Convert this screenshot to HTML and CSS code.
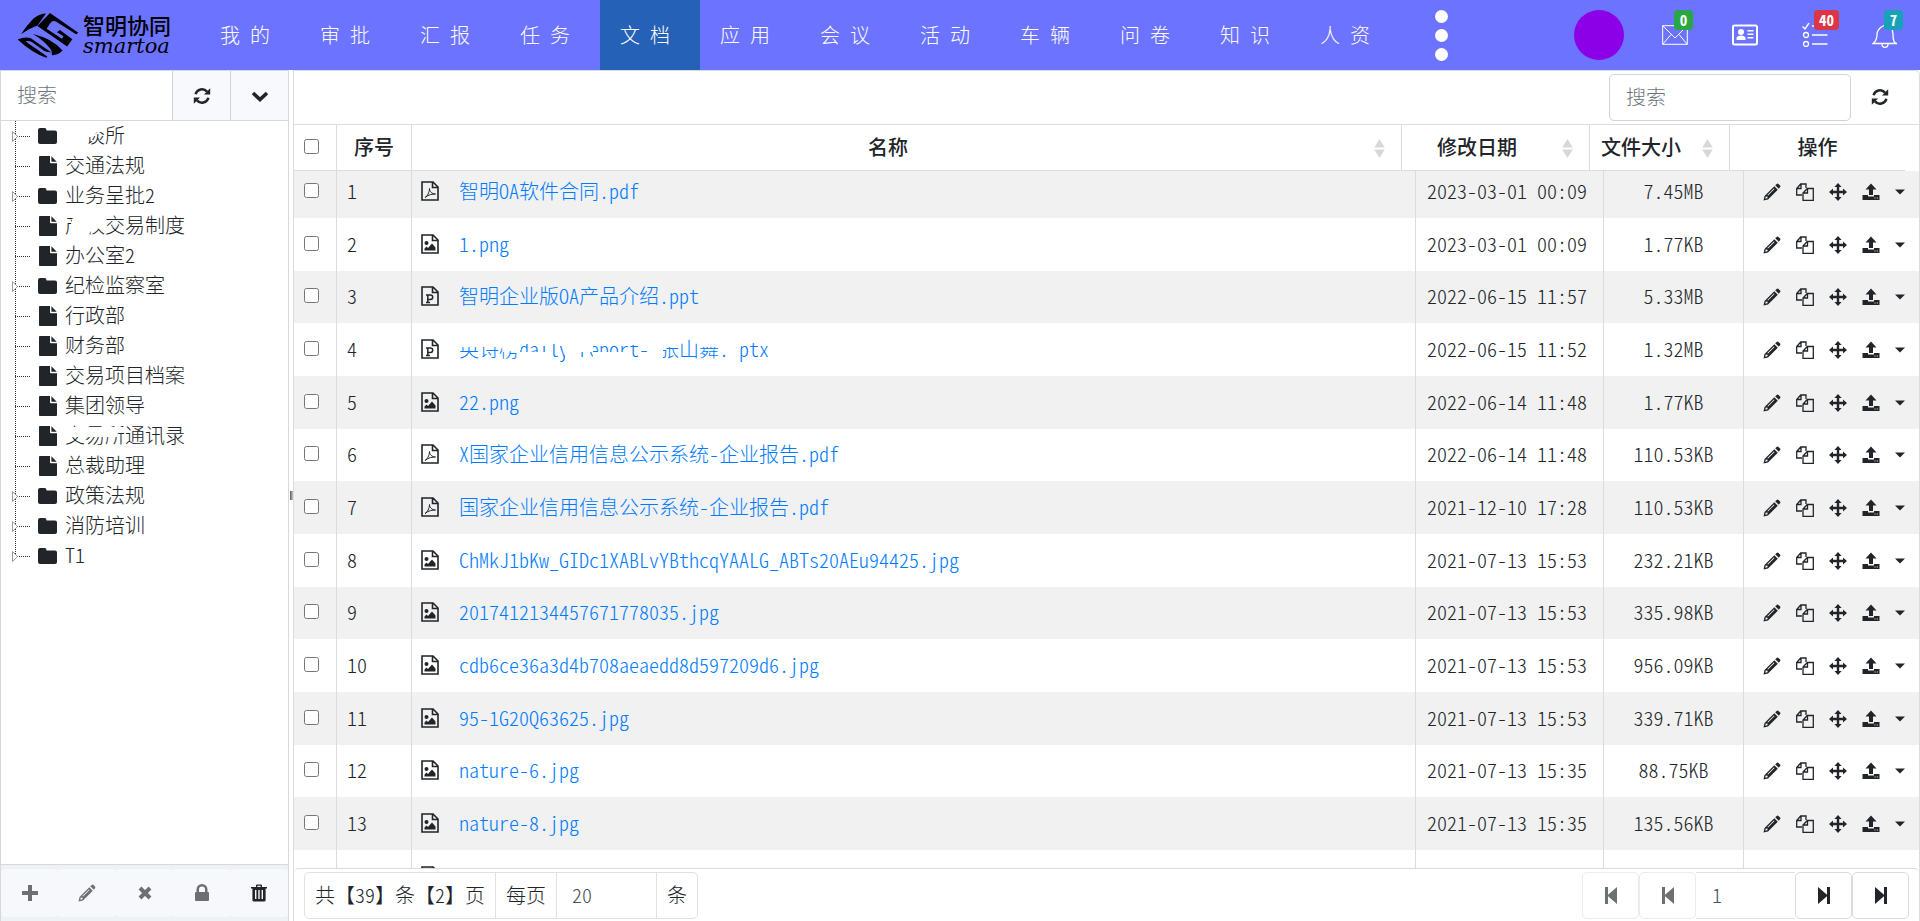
FILE: index.html
```html
<!DOCTYPE html>
<html lang="zh-CN">
<head>
<meta charset="utf-8">
<title>智明协同 - 文档</title>
<link rel="stylesheet" href="styles.css">
</head>
<body>
<svg class="sprite" aria-hidden="true">
  <symbol id="i-refresh" viewBox="0 0 18 18"><path d="M2.6 7.2A6.6 6.6 0 0 1 14 4.6M15.4 10.8A6.6 6.6 0 0 1 4 13.4" fill="none" stroke="currentColor" stroke-width="2.5"/><path d="M17.2 1.2v6.2H11zM.8 16.8v-6.2H7z"/></symbol>
  <symbol id="i-down" viewBox="0 0 18 18"><path d="M2 6l7 6.6L16 6" fill="none" stroke="currentColor" stroke-width="3.6"/></symbol>
  <symbol id="i-folder" viewBox="0 0 19 16"><path d="M2 0h4.5a2 2 0 0 1 2 2v.6H17a2 2 0 0 1 2 2V14a2 2 0 0 1-2 2H2a2 2 0 0 1-2-2V2a2 2 0 0 1 2-2z"/></symbol>
  <symbol id="i-file" viewBox="0 0 18 20"><path d="M1 0h10v6.2a1 1 0 0 0 1 1h6V19a1 1 0 0 1-1 1H1a1 1 0 0 1-1-1V1a1 1 0 0 1 1-1zM12.4.3l5.3 5.5h-5.3z"/></symbol>
  <symbol id="i-plus" viewBox="0 0 18 18"><path d="M7 1h4v6h6v4h-6v6H7v-6H1V7h6z"/></symbol>
  <symbol id="i-pencil" viewBox="0 0 18 18"><path d="M12.2 2.2 14 .8q.8-.5 1.5.2l1.600 1.600q.6.8 0 1.500L15.800 5.800zM11.300 3.200l3.500 3.500L5 16.600l-4.500 1 1-4.500zM2.700 13.600l-.4 2.100 2.100-.5.300-1.500zM10.900 5.400l-6.500 6.500.6.500 6.500-6.500z" fill-rule="evenodd"/></symbol>
  <symbol id="i-times" viewBox="0 0 18 18"><path d="M4 4l10 10M14 4L4 14" fill="none" stroke="currentColor" stroke-width="4"/></symbol>
  <symbol id="i-lock" viewBox="0 0 18 18"><path d="M3.500 8V5.500a5.500 5.500 0 0 1 11 0V8h.5q1 0 1 1v7q0 1-1 1H3q-1 0-1-1V9q0-1 1-1zM6 8h6V5.500a3 3 0 0 0-6 0z" fill-rule="evenodd"/></symbol>
  <symbol id="i-trash" viewBox="0 0 18 18"><path d="M6 3V1.500Q6 .5 7 .5h4q1 0 1 1V3h5v1.600h-1.400V16q0 1.500-1.500 1.500H3.900Q2.400 17.500 2.400 16V4.600H1V3zm1.400 0h3.200V1.800H7.400zM5 6v9h1.400V6zm3.300 0v9h1.400V6zm3.300 0v9H13V6z" fill-rule="evenodd"/></symbol>
  <symbol id="i-pdf" viewBox="0 0 18 20"><path d="M1 1h11l5 5v13H1zM11.500 1v5.500H17" fill="none" stroke="currentColor" stroke-width="1.600"/><path d="M4 16.500c2-1 4.500-5 4.500-9 0 3 2.500 5.500 6 5.500-3 0-7 .5-10.500 3.500z" fill="none" stroke="currentColor"/></symbol>
  <symbol id="i-image" viewBox="0 0 18 20"><path d="M1 1h11l5 5v13H1zM11.500 1v5.500H17" fill="none" stroke="currentColor" stroke-width="1.600"/><circle cx="5.500" cy="9" r="2"/><path d="M3.500 16.500v-2l2-2 1.500 1.500 4-4.500 3.500 4v3z"/></symbol>
  <symbol id="i-ppt" viewBox="0 0 18 20"><path d="M1 1h11l5 5v13H1zM11.500 1v5.500H17" fill="none" stroke="currentColor" stroke-width="1.600"/><path d="M5 9h5M6.800 9v7.500M5 16.400h4M7 9h2.500a2.200 2.200 0 0 1 0 4.400H7" fill="none" stroke="currentColor" stroke-width="1.500"/></symbol>
  <symbol id="i-copy" viewBox="0 0 18 18"><path d="M6 12H.7V5.500l4-4.500H10v4M.7 5.500H5V1M7 17.300V10l4.300-4.500h6v11.800zM7 10h4.500V5.500" fill="none" stroke="currentColor" stroke-width="1.300"/></symbol>
  <symbol id="i-move" viewBox="0 0 18 18"><path d="M9 0l3.600 4H10.200V7.800H14V5.400L18 9l-4 3.600v-2.400h-3.800V14h2.400L9 18l-3.600-4h2.400v-3.800H4v2.400L0 9l4-3.600v2.400h3.800V4H5.400z"/></symbol>
  <symbol id="i-upload" viewBox="0 0 18 18"><path d="M9 .5l5.500 6H11V12H7V6.500H3.500zM.5 12H6v1.500h6V12h5.500v5H.5zM12.500 14.500v1h1v-1zm2.300 0v1h1v-1z" fill-rule="evenodd"/></symbol>
  <symbol id="i-caret" viewBox="0 0 10 6"><path d="M0 .5h10l-5 5z"/></symbol>
  <symbol id="i-sort" viewBox="0 0 10 18"><path d="M5 0l5 8H0zM0 10h10l-5 8z"/></symbol>
  <symbol id="i-prev" viewBox="0 0 12 17"><path d="M0 0h3v7.700L12 0v17L3 9.300V17H0z"/></symbol>
  <symbol id="i-next" viewBox="0 0 12 17"><path d="M12 0H9v7.700L0 0v17l9-7.700V17h3z"/></symbol>
</svg>

<header class="topbar">
  <a class="brand" href="#">
    <svg class="brand-mark" viewBox="50 36 188 138"><path d="M62 103Q80 75 100 55 120 40 138 40L112 76Q85 85 62 103zM150 38l86 60-7 5-61-39q-10-4-18 6l-10 16 46 30 5-7-20-12 9-7 38 28-16 22-90-62zM52 119q22-10 40-4l44 30q10 7 18 12-12 2-22-4L96 127q-12-6-20-2l66 45-4 4Q96 160 52 119zM98 102q60 14 90 50-14 15-33 14 4-12-8-24-18-22-49-40z"/></svg>
    <span class="brand-text"><b>智明协同</b><i>smartoa</i></span>
  </a>
  <nav class="menu">
    <a href="#">我 的</a><a href="#">审 批</a><a href="#">汇 报</a><a href="#">任 务</a><a href="#" class="active">文 档</a><a href="#">应 用</a><a href="#">会 议</a><a href="#">活 动</a><a href="#">车 辆</a><a href="#">问 卷</a><a href="#">知 识</a><a href="#">人 资</a>
  </nav>
  <button class="more" aria-label="更多"><span></span><span></span><span></span></button>
  <div class="tools">
    <button class="avatar" aria-label="用户"></button>
    <button class="tool" aria-label="邮件"><svg width="26" height="20" viewBox="0 0 26 20"><path d="M.7.700h24.600v18.600H.7zM.7.700 13 13 25.300.7M.7 19.300l8.300-9.800M25.300 19.300 17 9.500" fill="none" stroke="#fff"/></svg><span class="badge green">0</span></button>
    <button class="tool" aria-label="通讯录"><svg width="26" height="22" viewBox="0 0 26 22"><rect x="1" y="1.500" width="24" height="19" rx="1.500" fill="none" stroke="#fff" stroke-width="2"/><circle cx="9" cy="8" r="3" fill="#fff"/><path d="M4.500 16v-2.500q1-2 4.500-2t4.500 2V16zM15.500 6h6v1.600h-6zm0 3.500h6v1.600h-6zm0 3.500h6v1.600h-6z" fill="#fff"/></svg></button>
    <button class="tool" aria-label="待办"><svg width="26" height="24" viewBox="0 0 26 24"><path d="M.5 3.500l2.500 2.500L7 0M10 3h15.500M10 12h15.500M10 21h15.500" fill="none" stroke="#fff" stroke-width="1.400"/><circle cx="4" cy="12" r="2.500" fill="none" stroke="#fff" stroke-width="1.300"/><circle cx="4" cy="21" r="2.500" fill="none" stroke="#fff" stroke-width="1.300"/></svg><span class="badge red">40</span></button>
    <button class="tool" aria-label="通知"><svg width="26" height="26" viewBox="0 0 26 26"><path d="M1 21.500q4-3 4-9T13 3q8 .5 8 9.500t4 9zM10 22q0 3.300 3 3.300t3-3.300" fill="none" stroke="#fff" stroke-width="1.300"/></svg><span class="badge teal">7</span></button>
  </div>
</header>

<div class="layout">
  <aside class="side">
    <div class="side-search">
      <input type="text" placeholder="搜索" aria-label="搜索目录">
      <button aria-label="刷新"><svg class="ic"><use href="#i-refresh"/></svg></button>
      <button aria-label="展开"><svg class="ic"><use href="#i-down"/></svg></button>
    </div>
    <ul class="tree" id="tree"></ul>
    <div class="side-tools">
      <button disabled aria-label="新增"><svg class="ic"><use href="#i-plus"/></svg></button>
      <button disabled aria-label="编辑"><svg class="ic"><use href="#i-pencil"/></svg></button>
      <button disabled aria-label="取消"><svg class="ic"><use href="#i-times"/></svg></button>
      <button disabled aria-label="权限"><svg class="ic"><use href="#i-lock"/></svg></button>
      <button aria-label="删除"><svg class="ic"><use href="#i-trash"/></svg></button>
    </div>
  </aside>
  <div class="splitter"><span></span></div>
  <main class="main">
    <div class="toolbar">
      <input type="text" placeholder="搜索" aria-label="搜索文档">
      <button aria-label="刷新列表"><svg class="ic"><use href="#i-refresh"/></svg></button>
    </div>
    <div class="head-wrap">
      <table class="grid head">
        <colgroup><col class="c-check"><col class="c-no"><col><col class="c-date"><col class="c-size"><col class="c-ops"></colgroup>
        <thead><tr>
          <th><input type="checkbox" aria-label="全选"></th><th>序号</th>
          <th class="sortable">名称<svg><use href="#i-sort"/></svg></th>
          <th class="sortable">修改日期<svg><use href="#i-sort"/></svg></th>
          <th class="sortable">文件大小<svg><use href="#i-sort"/></svg></th>
          <th>操作</th>
        </tr></thead>
      </table>
    </div>
    <div class="body-wrap">
      <table class="grid body">
        <colgroup><col class="c-check"><col class="c-no"><col><col class="c-date"><col class="c-size"><col class="c-ops"></colgroup>
        <tbody id="rows"></tbody>
      </table>
    </div>
    <footer class="pager">
      <div class="group">
        <span>共【39】条【2】页</span><label for="size">每页</label><input id="size" type="text" value="20"><span>条</span>
      </div>
      <div class="pages">
        <button disabled aria-label="首页"><svg><use href="#i-prev"/></svg></button>
        <button disabled aria-label="上一页"><svg><use href="#i-prev"/></svg></button>
        <input type="text" value="1" aria-label="页码">
        <button aria-label="下一页"><svg><use href="#i-next"/></svg></button>
        <button aria-label="末页"><svg><use href="#i-next"/></svg></button>
      </div>
    </footer>
  </main>
</div>
<script src="app.js"></script>
</body>
</html>
```
FILE: styles.css
```css
* { box-sizing: border-box; }
html, body { height: 100%; }
body {
  margin: 0;
  display: flex;
  flex-direction: column;
  overflow: hidden;
  background: #fff;
  color: #212529;
  font-family: "Noto Sans CJK SC", sans-serif;
  font-size: 20px;
  font-weight: 300;
  line-height: 30px;
  font-feature-settings: "hwid" 1;
}
button, input { font: inherit; font-feature-settings: inherit; color: inherit; }
button { border: 0; padding: 0; background: none; display: flex; align-items: center; justify-content: center; }
input[type="text"] { border: 0; outline: 0; min-width: 0; background: #fff; color: #495057; }
input::placeholder { color: #6c757d; opacity: 1; }
input[type="checkbox"] { width: 15px; height: 15px; margin: 0; vertical-align: middle; }
a { text-decoration: none; color: #007bff; }
svg { fill: currentColor; display: block; flex: none; }
.sprite { display: none; }
.ic { width: 18px; height: 18px; }

.topbar { display: flex; align-items: center; height: 70px; flex: none; background: #6c73ff; color: #fff; }
.brand { width: 200px; display: flex; align-items: center; gap: 4px; padding-left: 17px; color: #000; }
.brand-mark { width: 62px; height: 46px; }
.brand-text { display: flex; flex-direction: column; }
.brand-text b { font-size: 22px; font-weight: 500; line-height: 22px; }
.brand-text i { font: italic 21px/22px "DejaVu Serif", serif; font-feature-settings: normal; }
.menu { display: flex; align-self: stretch; }
.menu a { width: 100px; display: flex; align-items: center; justify-content: center; padding-right: 10px; color: #fff; }
.menu a.active { background: #2661b8; }
.more { width: 82px; flex-direction: column; gap: 6px; }
.more span { width: 13px; height: 13px; border-radius: 50%; background: #fff; }
.tools { display: flex; align-items: center; margin-left: auto; }
.avatar { width: 50px; height: 50px; border-radius: 50%; background: #8b00e6; margin-right: 16px; }
.tool { width: 70px; height: 70px; position: relative; }
.badge { position: absolute; top: 10px; left: 34px; padding: 0 5px; border-radius: 4px; font-size: 15px; font-weight: 700; line-height: 20px; color: #fff; min-width: 19px; }
.green { background: #28a745; }
.red { background: #dc3545; }
.teal { background: #17a2b8; }

.layout { flex: 1; display: flex; min-height: 0; }
.side { width: 289px; flex: none; display: flex; flex-direction: column; border: 1px solid #d6d8db; border-bottom: 0; }
.side-search { display: flex; height: 50px; border-bottom: 1px solid #d6d8db; }
.side-search input { flex: 1; padding: 0 16px 2px; }
.side-search button { width: 58px; background: #f8f9fc; border-left: 1px solid #ced4da; }
.tree { flex: 1; list-style: none; margin: 0; padding: 0 0 0 11px; min-height: 0; overflow: hidden; }
.tree li { display: flex; align-items: center; height: 30px; position: relative; }
.tree .branch {
  width: 20px; align-self: stretch; display: flex; align-items: center; margin-right: 6px;
  background:
    repeating-linear-gradient(90deg, #333 0 1px, transparent 1px 2px) 3px 15px / 16px 1px no-repeat,
    repeating-linear-gradient(#333 0 1px, transparent 1px 2px) 3px 0 / 1px 100% no-repeat;
}
.tree li:last-child .branch {
  background:
    repeating-linear-gradient(90deg, #333 0 1px, transparent 1px 2px) 3px 15px / 16px 1px no-repeat,
    repeating-linear-gradient(#333 0 1px, transparent 1px 2px) 3px 0 / 1px 15px no-repeat;
}
.tree .arrow { width: 6px; height: 11px; fill: #fff; stroke: #999; }
.tree .pic { width: 19px; display: flex; justify-content: center; margin-right: 8px; }
.tree .pic svg { width: 18px; height: 20px; }
.tree .pic .folder { width: 19px; height: 16px; }
.tree .label { position: relative; padding-bottom: 2px; }
.mask { position: absolute; left: 0; top: 0; fill: #fff; pointer-events: none; }
.side-tools { display: flex; height: 57px; padding: 4px 0; background: #eff2f5; border-top: 1px solid #d6d8db; color: #212529; }
.side-tools button { flex: 1; background: #f7f8fb; border-radius: 4px; }
.side-tools button:disabled { color: #6d7073; }

.splitter { width: 4px; flex: none; display: flex; align-items: center; justify-content: center; }
.splitter span { width: 3px; height: 9px; background: linear-gradient(90deg, #555, #ccc); }

.main { flex: 1; min-width: 0; display: flex; flex-direction: column; border: 1px solid #dcdcdc; border-bottom: 0; border-radius: 0 5px 0 0; }
.toolbar { display: flex; justify-content: flex-end; align-items: center; height: 54px; padding: 0 10px 1px 0; border-bottom: 1px solid #dcdcdc; }
.toolbar input { width: 242px; height: 47px; padding: 0 16px 2px; border: 1px solid #ced4da; border-radius: 5px; }
.toolbar button { width: 58px; height: 47px; }
.head-wrap { padding-right: 14px; }
.grid { width: 100%; table-layout: fixed; border-collapse: separate; border-spacing: 0; }
.c-check { width: 43px; }
.c-no { width: 75px; }
.c-date { width: 188px; }
.c-size { width: 140px; }
.c-ops { width: 175px; }
.grid th, .grid td { padding: 0 0 2px; border-right: 1px solid #dcdcdc; white-space: nowrap; text-align: center; }
.grid th:last-child, .grid td:last-child { border-right: 0; }
.grid th { height: 46px; font-weight: 500; border-bottom: 1px solid #dcdcdc; position: relative; }
.grid th:first-child, .grid td:first-child { text-align: left; padding: 0 0 8px 10px; line-height: 20px; }
.grid th.sortable { padding: 0 48px 2px 11px; }
.grid th svg { position: absolute; right: 16px; top: 14px; width: 11px; height: 19px; color: #d8d8d8; }
.body-wrap { flex: 1; min-height: 0; overflow: hidden; }
.grid.body { margin-top: -6px; }
.grid.body tr { height: 53px; }
.grid.body tr:nth-child(3n) { height: 52px; }
.grid.body tr:nth-child(odd) { background: #f1f1f1; }
.grid td:nth-child(2) { text-align: left; padding-left: 10px; }
.grid td:nth-child(4) { text-align: left; padding-left: 11px; }
.name { display: flex; align-items: center; gap: 20px; padding-left: 9px; }
.name > svg { width: 18px; height: 20px; }
.name a { position: relative; }
.ops { display: flex; align-items: center; gap: 15px; padding: 2px 0 0 19px; }
.ops svg { width: 18px; height: 18px; }
.ops .caret svg { width: 10px; height: 6px; }

.pager { display: flex; justify-content: space-between; align-items: flex-start; height: 53px; padding: 3px 10px 0; border-top: 1px solid #dcdcdc; border-radius: 5px 5px 0 0; }
.group { display: flex; height: 47px; border: 1px solid #dee2e6; border-radius: 5px; overflow: hidden; }
.group > * { display: flex; align-items: center; padding: 0 10px 2px; border-left: 1px solid #dee2e6; }
.group > :first-child { border-left: 0; }
.group input[type="text"] { width: 100px; padding: 0 15px 2px; border-left: 1px solid #dee2e6; }
.pages { display: flex; height: 47px; }
.pages button { width: 57px; border: 1px solid #d9dce3; border-radius: 5px; }
.pages button:disabled { color: #6d7073; border-color: #eaecef; }
.pages svg { width: 12px; height: 17px; }
.pages input[type="text"] { width: 99px; padding: 0 16px 2px; border: solid #dee2e6; border-width: 1px 0; }
```
FILE: app.js
```js
const use = (id, cls) => `<svg class="${cls || ''}"><use href="#i-${id}"/></svg>`;

const tree = [
  ['folder', '会谈所', 'M0 0H21V30H0zM20 0H40V12L32 12 28 17H20z'], ['file', '交通法规'], ['folder', '业务呈批2'],
  ['file', '产权交易制度', 'M10 0H40V20L28 18 20 30H8L6 14z'], ['file', '办公室2'], ['folder', '纪检监察室'],
  ['file', '行政部'], ['file', '财务部'], ['file', '交易项目档案'], ['file', '集团领导'],
  ['file', '交易所通讯录', 'M0 7H58V11L52 14V17H0z'], ['file', '总裁助理'], ['folder', '政策法规'],
  ['folder', '消防培训'], ['folder', 'T1']
];
const mask = (d, w) => d ? `<svg class="mask" width="${w}" height="30" viewBox="0 0 ${w} 30"><path d="${d}"/></svg>` : '';

document.getElementById('tree').innerHTML = tree.map(([kind, label, d]) => `<li>
  <span class="branch">${kind === 'folder' ? '<svg class="arrow" viewBox="0 0 6 11"><path d="M.5.5v10l5-5z"/></svg>' : ''}</span>
  <span class="pic">${use(kind, kind)}</span><span class="label">${label}${mask(d, 120)}</span></li>`).join('');

const files = [
  ['pdf', '智明OA软件合同.pdf', '2023-03-01 00:09', '7.45MB'],
  ['image', '1.png', '2023-03-01 00:09', '1.77KB'],
  ['ppt', '智明企业版OA产品介绍.ppt', '2022-06-15 11:57', '5.33MB'],
  ['ppt', '英诗榜daily report- 张山舞.pptx', '2022-06-15 11:52', '1.32MB',
    'M0 0H62V13H0zM40 0H62V16L44 18zM60 0H96V10H60zM60 18H92V30H60zM106 0H118V30H106zM118 0H134V18H118zM132 0H190V11H132zM134 18H172V30H134zM190 0H204V30H190zM204 0H222V13H204zM238 0H276V13H238zM268 0H282V13L276 30H270z'],
  ['image', '22.png', '2022-06-14 11:48', '1.77KB'],
  ['pdf', 'X国家企业信用信息公示系统-企业报告.pdf', '2022-06-14 11:48', '110.53KB'],
  ['pdf', '国家企业信用信息公示系统-企业报告.pdf', '2021-12-10 17:28', '110.53KB'],
  ['image', 'ChMkJ1bKw_GIDc1XABLvYBthcqYAALG_ABTs20AEu94425.jpg', '2021-07-13 15:53', '232.21KB'],
  ['image', '2017412134457671778035.jpg', '2021-07-13 15:53', '335.98KB'],
  ['image', 'cdb6ce36a3d4b708aeaedd8d597209d6.jpg', '2021-07-13 15:53', '956.09KB'],
  ['image', '95-1G20Q63625.jpg', '2021-07-13 15:53', '339.71KB'],
  ['image', 'nature-6.jpg', '2021-07-13 15:35', '88.75KB'],
  ['image', 'nature-8.jpg', '2021-07-13 15:35', '135.56KB'],
  ['image', 'nature-9.jpg', '2021-07-13 15:35', '96.12KB']
];
const ops = [['pencil', '编辑'], ['copy', '复制'], ['move', '移动'], ['upload', '上传']]
  .map(([id, t]) => `<button aria-label="${t}">${use(id)}</button>`).join('');

document.getElementById('rows').innerHTML = files.map(([kind, name, date, size, d], i) => `<tr>
  <td><input type="checkbox" aria-label="选择${i + 1}"></td><td>${i + 1}</td>
  <td><div class="name">${use(kind)}<a href="#">${name}${mask(d, 310)}</a></div></td>
  <td>${date}</td><td>${size}</td>
  <td><div class="ops">${ops}<button class="caret" aria-label="更多">${use('caret')}</button></div></td></tr>`).join('');
```
